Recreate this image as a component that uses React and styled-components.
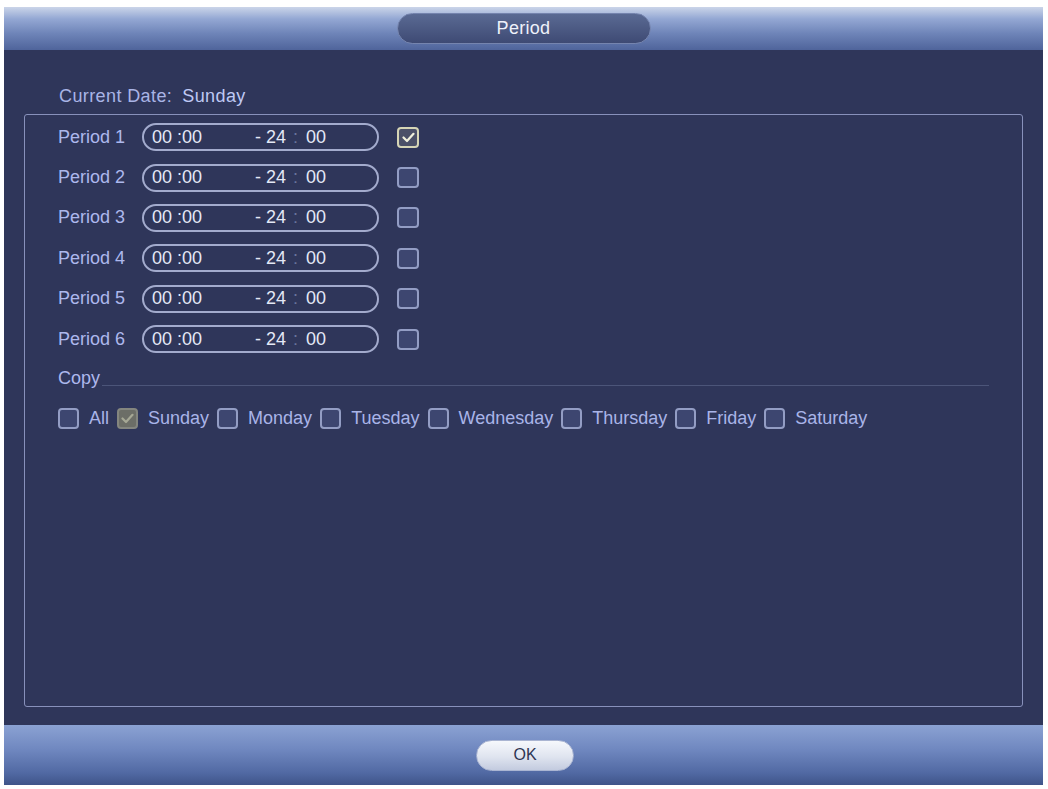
import React from 'react';
import styled, {createGlobalStyle} from 'styled-components';

const GlobalStyle = createGlobalStyle`
    html, body {
        margin: 0;
        padding: 0;
        background: #fff;
    }
    body {
        font-family: "Liberation Sans", Arial, sans-serif;
    }
`;

const Window = styled.div`
    margin: 7px 5px 0 4px;
    width: 1039px;
    height: 778px;
    display: flex;
    flex-direction: column;
    background: #2f365a;
`;

const Header = styled.div`
    height: 43px;
    flex-shrink: 0;
    display: flex;
    align-items: center;
    justify-content: center;
    background: linear-gradient(#cbd5e9 0%, #93a7d3 28%, #6e84b8 62%, #4f649b 100%);
`;

const TitlePill = styled.div`
    width: 252px;
    height: 29px;
    border-radius: 16px;
    border: 1px solid #7584ae;
    background: linear-gradient(#5a6a93, #3e4a74);
    display: flex;
    align-items: center;
    justify-content: center;
    color: #eef1fa;
    font-size: 18px;
    letter-spacing: 0.3px;
`;

const Body = styled.div`
    flex: 1;
    display: flex;
    flex-direction: column;
    padding: 0 20px 18px 20px;
`;

const DateLine = styled.div`
    height: 64px;
    display: flex;
    align-items: flex-end;
    padding: 0 0 7px 35px;
    box-sizing: border-box;
    font-size: 18px;
    letter-spacing: 0.4px;
    color: #a9b4e6;
    span {
        margin-left: 10px;
        color: #bfc9f4;
    }
`;

const Frame = styled.div`
    flex: 1;
    border: 1.5px solid #8891bb;
    border-radius: 3px;
    padding: 2px 33px 0 33px;
`;

const PeriodRow = styled.div`
    height: 40.4px;
    display: flex;
    align-items: center;
`;

const Label = styled.div`
    width: 84px;
    font-size: 18px;
    color: #adb8ed;
`;

const TimePill = styled.div`
    box-sizing: border-box;
    width: 237px;
    height: 28px;
    border: 2px solid #a3abcd;
    border-radius: 14px;
    display: flex;
    align-items: center;
    padding-left: 8px;
    font-size: 18px;
    color: #e4e8f6;
`;

const Start = styled.span`
    width: 103px;
`;

const Dim = styled.span`
    color: #69749c;
    margin: 0 8px 0 7px;
`;

const Box = styled.div`
    width: ${p => p.$w || 21}px;
    height: 21px;
    box-sizing: border-box;
    border-radius: 4px;
    border: 2px solid ${p => p.$border || '#939dc4'};
    background: ${p => p.$fill || '#3d4670'};
    display: flex;
    align-items: center;
    justify-content: center;
    margin-left: ${p => p.$ml || 0}px;
    flex-shrink: 0;
`;

const Check = ({color}) => (
    <svg width="13" height="11" viewBox="0 0 13 11">
        <path d="M1.5 5.5 L5 9 L11.5 1.8" fill="none" stroke={color} strokeWidth="2.2" strokeLinecap="round" strokeLinejoin="round"/>
    </svg>
);

const CopyLine = styled.div`
    height: 29px;
    display: flex;
    align-items: flex-end;
`;

const CopyText = styled.div`
    font-size: 18px;
    line-height: 20px;
    color: #adb8ed;
`;

const Rule = styled.div`
    flex: 1;
    height: 1px;
    margin: 0 0 2px 2px;
    background: #4c5579;
`;

const Days = styled.div`
    margin-top: 20px;
    display: flex;
    align-items: center;
    gap: 8px;
`;

const Day = styled.div`
    display: flex;
    align-items: center;
    gap: 10px;
    font-size: 18px;
    color: #a9b4e8;
`;

const Footer = styled.div`
    height: 60px;
    flex-shrink: 0;
    display: flex;
    align-items: center;
    justify-content: center;
    padding-left: 3px;
    background: linear-gradient(#8ba2d3 0%, #7088c0 40%, #5169a3 80%, #3f5489 100%);
`;

const OkButton = styled.button`
    width: 98px;
    height: 31px;
    border-radius: 16px;
    border: 1px solid #aab5d2;
    background: linear-gradient(#f6f8fc, #dfe4ef 55%, #c3cbdf);
    color: #2e3552;
    font-family: "Liberation Sans", Arial, sans-serif;
    font-size: 16px;
    padding: 0;
`;

const periods = [1, 2, 3, 4, 5, 6];
const days = ['All', 'Sunday', 'Monday', 'Tuesday', 'Wednesday', 'Thursday', 'Friday', 'Saturday'];

export default function App() {
    return (
        <>
            <GlobalStyle/>
            <Window>
                <Header>
                    <TitlePill>Period</TitlePill>
                </Header>
                <Body>
                    <DateLine>Current Date:<span>Sunday</span></DateLine>
                    <Frame>
                        {periods.map(n => (
                            <PeriodRow key={n}>
                                <Label>Period {n}</Label>
                                <TimePill>
                                    <Start>00 :00</Start>
                                    <span>- 24</span><Dim>:</Dim><span>00</span>
                                </TimePill>
                                {n === 1
                                    ? <Box $w={22} $ml={18} $border="#d6d5b6" $fill="#4b5068"><Check color="#f0f0dc"/></Box>
                                    : <Box $w={22} $ml={18}/>}
                            </PeriodRow>
                        ))}
                        <CopyLine>
                            <CopyText>Copy</CopyText>
                            <Rule/>
                        </CopyLine>
                        <Days>
                            {days.map(d => (
                                <Day key={d}>
                                    {d === 'Sunday'
                                        ? <Box $border="#84867f" $fill="#6c6e67"><Check color="#a6a895"/></Box>
                                        : <Box/>}
                                    {d}
                                </Day>
                            ))}
                        </Days>
                    </Frame>
                </Body>
                <Footer>
                    <OkButton>OK</OkButton>
                </Footer>
            </Window>
        </>
    );
}
